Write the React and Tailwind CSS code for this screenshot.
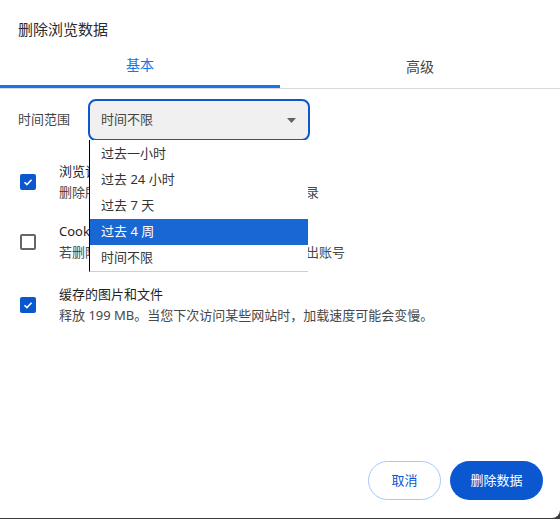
export default function App() {
  const font = { fontFamily: "'Noto Sans', 'Noto Sans CJK SC', sans-serif" }

  const options = ["过去一小时", "过去 24 小时", "过去 7 天", "过去 4 周", "时间不限"]

  return (
    <div className="h-[519px] w-[560px] bg-[#3c3c3c]" style={font}>
      <div className="flex h-[518px] flex-col rounded-br-[8px] bg-white">
        <div className="px-[18px] pt-[18px] text-[15px] leading-[22px] text-[#2b2b2b]">
          删除浏览数据
        </div>

        <div className="mt-[4px] flex border-b border-[#dadada]">
          <div className="-mb-px flex h-[44px] flex-1 items-center justify-center border-b-[3px] border-[#1a73e8] text-[14px] text-[#1a73e8]">
            基本
          </div>
          <div className="flex h-[44px] flex-1 items-center justify-center text-[14px] text-[#444]">
            高级
          </div>
        </div>

        <div className="mt-[10px] flex items-center gap-[18px] px-[18px]">
          <span className="text-[13px] text-[#444]">时间范围</span>
          <div className="relative">
            <div className="flex h-[42px] w-[222px] items-center justify-between rounded-[8px] border-2 border-[#0b57d0] bg-[#f0f0f0] pl-[11px] pr-[12px] text-[13px] text-[#444]">
              <span>时间不限</span>
              <svg width="9" height="5" viewBox="0 0 9 5">
                <path d="M0 0h9L4.5 5z" fill="#5f6368" />
              </svg>
            </div>
            <div className="absolute left-[1px] top-[41px] z-10 w-[219px] border-b border-l border-b-[#cfcfcf] border-l-black bg-white pt-[1px]">
              {options.map((o, i) => (
                <div
                  key={o}
                  className={
                    "flex h-[26px] items-center pl-[11px] text-[13px] " +
                    (i === 3 ? "bg-[#1967d2] text-white" : "text-[#333]")
                  }
                >
                  {o}
                </div>
              ))}
            </div>
          </div>
        </div>

        <div className="mt-[20px] flex items-center gap-[23px] pl-[20px]">
          <Checkbox checked />
          <div>
            <div className="text-[13px] leading-[21px] text-[#1f1f1f]">浏览记录</div>
            <div className="text-[13px] leading-[21px] text-[#474747]">
              删除所有已同步设备上的浏览记录和搜索记录
            </div>
          </div>
        </div>

        <div className="mt-[18px] flex items-center gap-[23px] pl-[20px]">
          <Checkbox />
          <div>
            <div className="text-[13px] leading-[21px] text-[#1f1f1f]">Cookie 及其他网站数据</div>
            <div className="text-[13px] leading-[21px] text-[#474747]">
              若删除这些数据，您将会从大多数网站中退出账号
            </div>
          </div>
        </div>

        <div className="mt-[21px] flex items-center gap-[23px] pl-[20px]">
          <Checkbox checked />
          <div>
            <div className="text-[13px] leading-[21px] text-[#1f1f1f]">缓存的图片和文件</div>
            <div className="text-[13px] leading-[21px] text-[#474747]">
              释放 199 MB。当您下次访问某些网站时，加载速度可能会变慢。
            </div>
          </div>
        </div>

        <div className="flex-1" />

        <div className="flex justify-end gap-[9px] pb-[18px] pr-[17px]">
          <button className="h-[39px] w-[73px] rounded-full border border-[#a8c7fa] text-[13px] text-[#0b57d0]">
            取消
          </button>
          <button className="h-[39px] w-[93px] rounded-full bg-[#0b57d0] text-[13px] text-white">
            删除数据
          </button>
        </div>
      </div>
    </div>
  )
}

function Checkbox({ checked }) {
  if (checked) {
    return (
      <div className="flex h-[16px] w-[16px] items-center justify-center rounded-[2px] bg-[#0b57d0]">
        <svg width="12" height="12" viewBox="0 0 12 12">
          <path d="M2.5 6.2l2.4 2.4L9.6 3.8" fill="none" stroke="white" strokeWidth="1.6" />
        </svg>
      </div>
    )
  }
  return <div className="h-[16px] w-[16px] rounded-[2px] border-2 border-[#666]" />
}
